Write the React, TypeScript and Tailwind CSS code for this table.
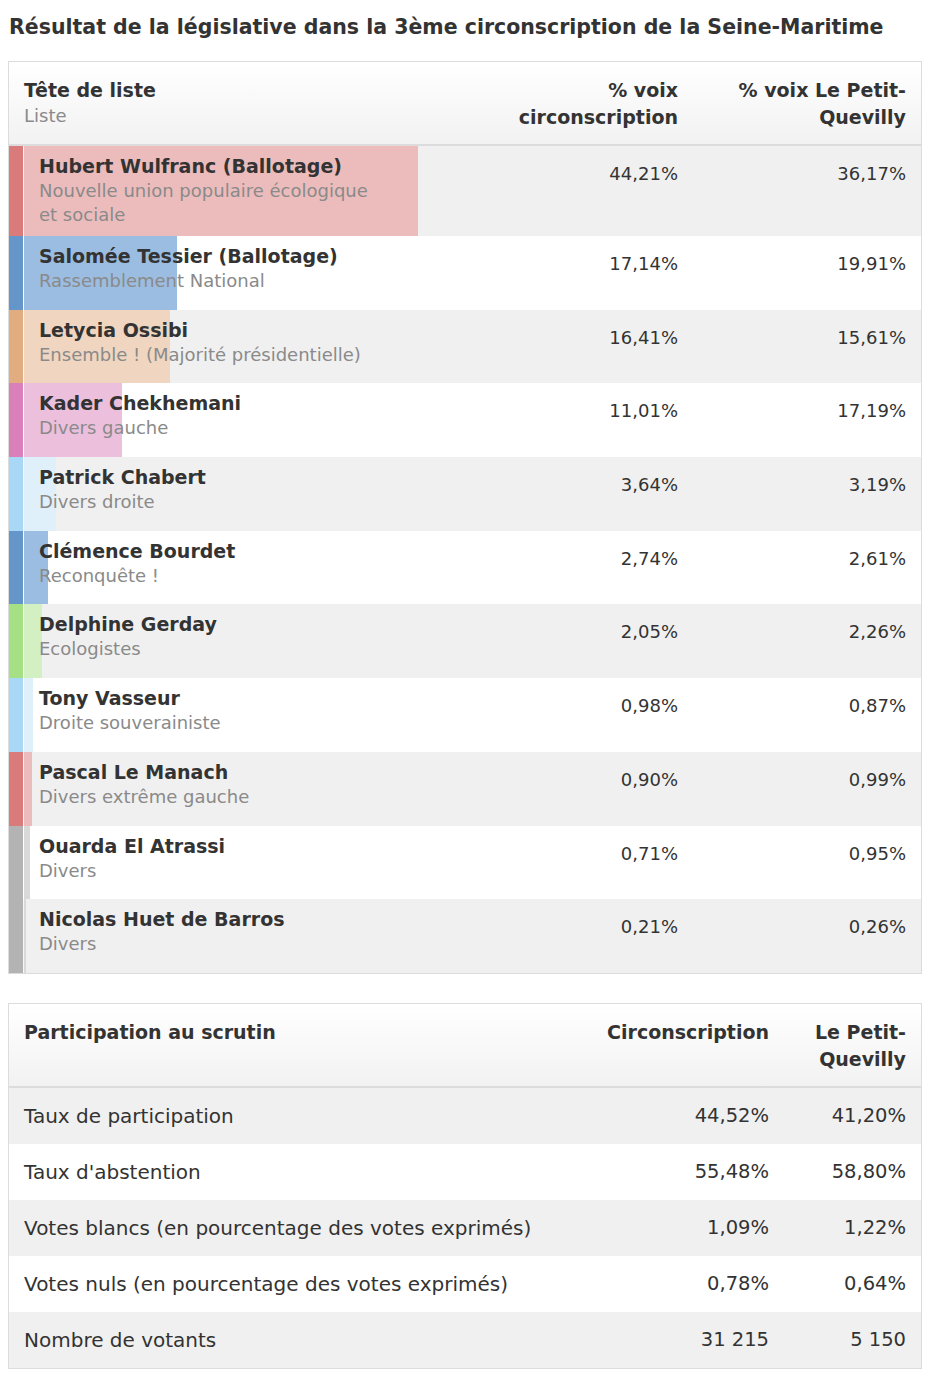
import clsx from "clsx";

type Candidate = {
  name: string;
  party: string;
  circ: string;
  ville: string;
  pct: number;
  strip: string;
  bar: string;
};

const candidates: Candidate[] = [
  { name: "Hubert Wulfranc (Ballotage)", party: "Nouvelle union populaire écologique et sociale", circ: "44,21%", ville: "36,17%", pct: 44.21, strip: "bg-[#d97b7b]", bar: "bg-[#ecbcbc]" },
  { name: "Salomée Tessier (Ballotage)", party: "Rassemblement National", circ: "17,14%", ville: "19,91%", pct: 17.14, strip: "bg-[#6596c9]", bar: "bg-[#9bbde1]" },
  { name: "Letycia Ossibi", party: "Ensemble ! (Majorité présidentielle)", circ: "16,41%", ville: "15,61%", pct: 16.41, strip: "bg-[#e0ac80]", bar: "bg-[#f0d6c0]" },
  { name: "Kader Chekhemani", party: "Divers gauche", circ: "11,01%", ville: "17,19%", pct: 11.01, strip: "bg-[#d97fba]", bar: "bg-[#ecc0dd]" },
  { name: "Patrick Chabert", party: "Divers droite", circ: "3,64%", ville: "3,19%", pct: 3.64, strip: "bg-[#a8d8f5]", bar: "bg-[#dff0fb]" },
  { name: "Clémence Bourdet", party: "Reconquête !", circ: "2,74%", ville: "2,61%", pct: 2.74, strip: "bg-[#6596c9]", bar: "bg-[#9bbde1]" },
  { name: "Delphine Gerday", party: "Ecologistes", circ: "2,05%", ville: "2,26%", pct: 2.05, strip: "bg-[#a6e084]", bar: "bg-[#d3f0c2]" },
  { name: "Tony Vasseur", party: "Droite souverainiste", circ: "0,98%", ville: "0,87%", pct: 0.98, strip: "bg-[#a8d8f5]", bar: "bg-[#dff0fb]" },
  { name: "Pascal Le Manach", party: "Divers extrême gauche", circ: "0,90%", ville: "0,99%", pct: 0.9, strip: "bg-[#d97b7b]", bar: "bg-[#ecbcbc]" },
  { name: "Ouarda El Atrassi", party: "Divers", circ: "0,71%", ville: "0,95%", pct: 0.71, strip: "bg-[#b3b3b3]", bar: "bg-[#d9d9d9]" },
  { name: "Nicolas Huet de Barros", party: "Divers", circ: "0,21%", ville: "0,26%", pct: 0.21, strip: "bg-[#b3b3b3]", bar: "bg-[#d9d9d9]" },
];

const participation = [
  { label: "Taux de participation", circ: "44,52%", ville: "41,20%" },
  { label: "Taux d'abstention", circ: "55,48%", ville: "58,80%" },
  { label: "Votes blancs (en pourcentage des votes exprimés)", circ: "1,09%", ville: "1,22%" },
  { label: "Votes nuls (en pourcentage des votes exprimés)", circ: "0,78%", ville: "0,64%" },
  { label: "Nombre de votants", circ: "31 215", ville: "5 150" },
];

// px per percent point of the bar behind the candidate name
const BAR_SCALE = 8.91;

function ResultsTable() {
  return (
    <div className="w-[914px] border border-[#dcdcdc]">
      <div className="grid grid-cols-[50%_25%_25%] border-b-2 border-[#dcdcdc] bg-gradient-to-b from-white to-[#f2f2f2] text-[19px] leading-[27px] font-bold">
        <div className="px-[15px] pt-[15px] pb-[13px]">
          <div>Tête de liste</div>
          <div className="text-[18px] leading-[24px] font-normal text-[#8a8a8a]">Liste</div>
        </div>
        <div className="px-[15px] pt-[15px] pb-[13px] text-right">% voix circonscription</div>
        <div className="px-[15px] pt-[15px] pb-[13px] text-right">% voix Le Petit-Quevilly</div>
      </div>
      {candidates.map((c, i) => (
        <div
          key={c.name}
          className={clsx(
            "grid min-h-[73.7px] grid-cols-[50%_25%_25%]",
            i % 2 === 0 ? "bg-[#f0f0f0]" : "bg-white"
          )}
        >
          <div className="flex">
            <div className={clsx("w-[14px] shrink-0", c.strip)} />
            <div className="w-px shrink-0 bg-white/40" />
            <div className="relative flex-1 px-[15px] pt-[8px] pb-[9px]">
              {/* score bar */}
              <div
                className={clsx("absolute top-0 bottom-0 left-0", c.bar)}
                style={{ width: `${c.pct * BAR_SCALE}px` }}
              />
              <div className="relative max-w-[345px]">
                <div className="text-[19px] leading-[25px] font-bold">{c.name}</div>
                <div className="text-[18px] leading-[24px] text-[#8a8a8a]">{c.party}</div>
              </div>
            </div>
          </div>
          <div className="px-[15px] pt-[15px] text-right text-[18px] leading-[25px]">{c.circ}</div>
          <div className="px-[15px] pt-[15px] text-right text-[18px] leading-[25px]">{c.ville}</div>
        </div>
      ))}
    </div>
  );
}

function ParticipationTable() {
  return (
    <div className="w-[914px] border border-[#dcdcdc]">
      <div className="grid grid-cols-[1fr_196px_137px] border-b-2 border-[#dcdcdc] bg-gradient-to-b from-white to-[#f2f2f2] text-[19px] leading-[27px] font-bold">
        <div className="px-[15px] pt-[15px] pb-[13px]">Participation au scrutin</div>
        <div className="px-[15px] pt-[15px] pb-[13px] text-right">Circonscription</div>
        <div className="px-[15px] pt-[15px] pb-[13px] text-right">Le Petit-Quevilly</div>
      </div>
      {participation.map((row, i) => (
        <div
          key={row.label}
          className={clsx(
            "grid h-[56px] grid-cols-[1fr_196px_137px] items-center",
            i % 2 === 0 ? "bg-[#f0f0f0]" : "bg-white"
          )}
        >
          <div className="px-[15px] text-[20px]">{row.label}</div>
          <div className="px-[15px] text-right text-[19.5px]">{row.circ}</div>
          <div className="px-[15px] text-right text-[19.5px]">{row.ville}</div>
        </div>
      ))}
    </div>
  );
}

export default function App() {
  return (
    <div className="min-h-[1387px] bg-white px-[8px] pt-[13px] font-['DejaVu_Sans',sans-serif] text-[#333]">
      <h1 className="pl-px text-[20.5px] leading-[28px] font-bold">
        Résultat de la législative dans la 3ème circonscription de la Seine-Maritime
      </h1>
      <div className="mt-[20px] flex flex-col gap-[29px]">
        <ResultsTable />
        <ParticipationTable />
      </div>
    </div>
  );
}
